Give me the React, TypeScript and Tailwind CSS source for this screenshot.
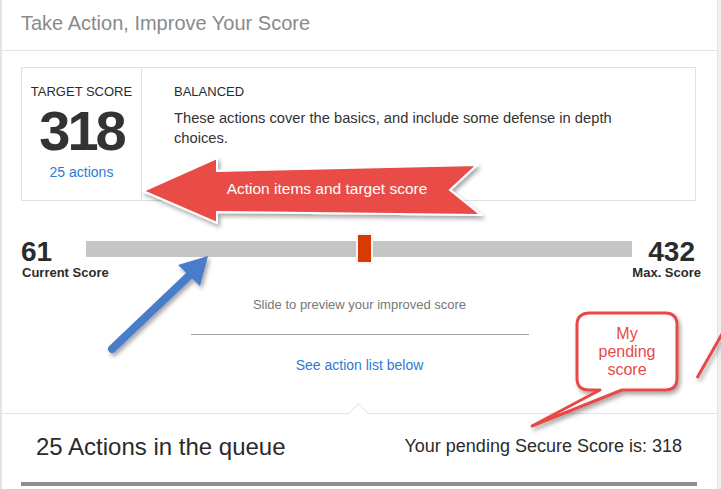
import { ReactElement } from "react"

const font = { fontFamily: '"Liberation Sans", Arial, sans-serif' }

const ScoreBox = (): ReactElement => (
  <div className="mt-[16px] mr-[1px] flex h-[134px] shrink-0 border border-[#e0e0e0]">
    <div className="flex w-[120px] flex-col items-center border-r border-[#e0e0e0] pt-[16px]">
      <span className="text-[13px] leading-[16px] text-[#2b2b2b]">TARGET SCORE</span>
      <span className="mt-[3px] text-[56px] font-bold leading-[56px] tracking-[-3px] text-[#333]">318</span>
      <span className="mt-[4px] text-[14px] leading-[18px] text-[#2b7bd6]">25 actions</span>
    </div>
    <div className="flex-1 pt-[16px] pl-[32px] pr-[48px]">
      <div className="text-[13px] leading-[16px] text-[#2b2b2b]">BALANCED</div>
      <p className="mt-[8px] text-[14.7px] leading-[20px] text-[#333]">
        These actions cover the basics, and include some defense in depth choices.
      </p>
    </div>
  </div>
)

const ScoreSlider = (): ReactElement => (
  <div className="mt-[37px] flex w-[680px] whitespace-nowrap">
    <div className="w-[65px]">
      <div className="text-[28px] font-bold leading-[28px] text-[#2b2b2b]">61</div>
      <div className="pl-px text-[13px] font-bold leading-[14px] text-[#2b2b2b]">Current Score</div>
    </div>
    <div className="relative mt-[3px] h-[16px] flex-1 bg-[#c5c5c5]">
      <div className="absolute -top-[8px] left-[270px] h-[31px] w-[17px] border-2 border-[#f4f4f4] bg-[#d83b01]" />
    </div>
    <div className="flex w-[69px] flex-col items-end">
      <div className="pr-[6px] text-[28px] font-bold leading-[28px] text-[#2b2b2b]">432</div>
      <div className="text-[13px] font-bold leading-[14px] text-[#2b2b2b]">Max. Score</div>
    </div>
  </div>
)

const Annotations = (): ReactElement => (
  <svg className="pointer-events-none absolute left-0 top-0" width={721} height={489} viewBox="0 0 721 489">
    <defs>
      <filter id="sh" x="-20%" y="-20%" width="140%" height="140%">
        <feDropShadow dx="2" dy="3" stdDeviation="2" floodColor="#000" floodOpacity="0.35" />
      </filter>
    </defs>
    <polygon
      points="143,191 217,158 217,171 477,165 450,190 481,215 217,212 217,223"
      fill="#e94b47"
      stroke="#fff"
      strokeWidth={2}
      strokeLinejoin="miter"
      filter="url(#sh)"
    />
    <text x={327} y={194} textAnchor="middle" fill="#fff" fontSize={15.5} style={font}>
      Action items and target score
    </text>
    <g filter="url(#sh)">
      <line x1={112} y1={349} x2={192} y2={273} stroke="#4a7bc9" strokeWidth={8} strokeLinecap="round" />
      <polygon points="208,256 178,265 200,286" fill="#4a7bc9" />
    </g>
    <g filter="url(#sh)">
      <path
        d="M590,313 H665 Q677,313 677,325 V378 Q677,390 665,390 H622 L532,426 L600,390 H589 Q577,390 577,378 V325 Q577,313 590,313 Z"
        fill="#fff"
        stroke="#e84a47"
        strokeWidth={3}
        strokeLinejoin="round"
      />
      <line x1={697} y1={378} x2={722} y2={334} stroke="#e84a47" strokeWidth={3} />
    </g>
    <text textAnchor="middle" fill="#e84a47" fontSize={16} style={font}>
      <tspan x={627} y={339}>My</tspan>
      <tspan x={627} y={357}>pending</tspan>
      <tspan x={627} y={375}>score</tspan>
    </text>
  </svg>
)

const App = (): ReactElement => {
  return (
    <div className="relative flex h-[489px] w-full overflow-hidden bg-white" style={font}>
      <div className="flex w-[718px] shrink-0 flex-col border-l-2 border-r border-[#e3e3e3]">
        <div className="h-[51px] shrink-0 border-b border-[#e3e3e3] pt-[11px] pl-[19px] text-[20px] leading-[24px] text-[#8a8a8a]">
          Take Action, Improve Your Score
        </div>
        <div className="relative shrink-0 border-b border-[#e3e3e3] pl-[19px] pr-[20px] pb-[39px]">
          <ScoreBox />
          <ScoreSlider />
          <div className="ml-[-19px] mr-[-20px] flex flex-col items-center">
            <div className="mt-[17px] text-[13px] leading-[16px] text-[#777]">Slide to preview your improved score</div>
            <div className="mt-[21px] h-px w-[338px] bg-[#a6a6a6]" />
            <div className="mt-[21px] text-[14px] leading-[18px] text-[#2b7bd6]">See action list below</div>
          </div>
          <div className="absolute -bottom-[8px] left-[349px] h-[15px] w-[15px] rotate-45 border-l border-t border-[#e3e3e3] bg-white" />
        </div>
        <div className="flex shrink-0 items-start justify-between pt-[19px] pl-[34px] pr-[35px]">
          <span className="text-[24px] leading-[28px] text-[#2b2b2b]">25 Actions in the queue</span>
          <span className="mt-[2px] text-[18px] leading-[22px] text-[#2b2b2b]">Your pending Secure Score is: 318</span>
        </div>
        <div className="mt-[21px] ml-[19px] mr-[20px] h-[4px] shrink-0 bg-[#8e8e8e]" />
      </div>
      <div className="flex-1 bg-[#efefef]" />
      <Annotations />
    </div>
  )
}

export default App
